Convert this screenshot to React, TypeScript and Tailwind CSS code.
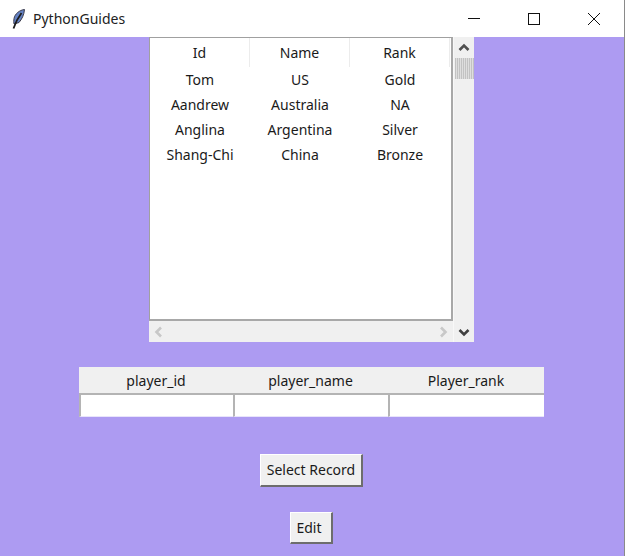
const rows = [
  ["Tom", "US", "Gold"],
  ["Aandrew", "Australia", "NA"],
  ["Anglina", "Argentina", "Silver"],
  ["Shang-Chi", "China", "Bronze"],
];

function Feather() {
  return (
    <svg width="13" height="20" viewBox="0 0 13 20">
      <path d="M12.500 .5C7.500 1 2.800 5 2 9.500c-.4 2.300-.3 3.800 0 5.500L7 13.500C10 10 12 6 12.500 .5z" fill="#6482c4" stroke="#3a3a4a" strokeWidth="1" />
      <path d="M9.500 4C6.500 8 3.500 13 1.500 19.500" fill="none" stroke="#1c1c1c" strokeWidth="1.800" />
    </svg>
  );
}

// scrollbar arrows, the lucide ones come out too thin
function Arrow({ points, color }: { points: string; color: string }) {
  return (
    <svg width="12" height="12" viewBox="0 0 12 12" style={{ color }}>
      <polyline points={points} fill="none" stroke="currentColor" strokeWidth="2.600" />
    </svg>
  );
}

export default function App() {
  return (
    <div className="w-[626px] h-[556px] bg-white">
      <div className="w-[625px] h-full flex flex-col overflow-hidden text-[14px] leading-none text-[#1a1a1a] font-['Noto_Sans',sans-serif] border-r border-[#8a8a8a]">
        <div className="h-[37px] shrink-0 flex items-center bg-white">
          <div className="w-[33px] pl-[12px] flex items-center"><Feather /></div>
          <span className="text-[14px] text-[#222]">PythonGuides</span>
          <div className="ml-auto flex items-center">
            <div className="w-[60px] flex justify-center">
              <svg width="12" height="12" viewBox="0 0 12 12" shapeRendering="crispEdges"><path d="M0 5.500h12" stroke="#111" /></svg>
            </div>
            <div className="w-[60px] flex justify-center">
              <svg width="12" height="12" viewBox="0 0 12 12" shapeRendering="crispEdges"><rect x=".5" y=".5" width="11" height="11" fill="none" stroke="#111" /></svg>
            </div>
            <div className="w-[60px] flex justify-center">
              <svg width="12" height="12" viewBox="0 0 12 12"><path d="M0 0l12 12M12 0L0 12" stroke="#111" strokeWidth="1" /></svg>
            </div>
          </div>
        </div>

        <div className="flex-1 bg-[#ad9bf2] flex flex-col items-center pr-px">
          <div className="w-[325px] h-[305px] shrink-0 bg-[#f0f0f0] flex">
            <div className="w-[304px] flex flex-col">
              <div className="h-[284px] bg-white border border-t-[#a0a0a0] border-l-[#a0a0a0] border-r-2 border-b-2 border-r-[#a8a8a8] border-b-[#a8a8a8] flex flex-col">
                <div className="h-[29px] grid grid-cols-[100px_100px_100px]">
                  {["Id", "Name", "Rank"].map((h) => (
                    <div key={h} className="flex items-center justify-center border-r border-[#ececec]">{h}</div>
                  ))}
                </div>
                {rows.map((r) => (
                  <div key={r[0]} className="h-[25px] grid grid-cols-[100px_100px_100px] items-center text-center">
                    {r.map((c) => <div key={c}>{c}</div>)}
                  </div>
                ))}
              </div>
              <div className="flex-1 flex items-center justify-between px-[4px]">
                <Arrow points="8,1.500 3.500,6 8,10.500" color="#c8c8c8" />
                <Arrow points="4,1.500 8.500,6 4,10.500" color="#c8c8c8" />
              </div>
            </div>
            <div className="flex-1 border-l border-[#f8f8f8] flex flex-col items-center">
              <div className="h-[21px] flex items-center"><Arrow points="1.500,8 6,3.500 10.500,8" color="#505050" /></div>
              <div className="w-[19px] h-[21px] bg-[repeating-linear-gradient(90deg,#c2c2c2_0,#c2c2c2_1px,#dedede_1px,#dedede_2px)]" />
              <div className="mt-auto h-[21px] flex items-center"><Arrow points="1.500,4 6,8.500 10.500,4" color="#404040" /></div>
            </div>
          </div>

          <div className="w-[465px] mt-[25px] grid grid-cols-[154px_155px_156px] bg-[#f0f0f0]">
            {["player_id", "player_name", "Player_rank"].map((h) => (
              <div key={h} className="h-[26px] pt-[2px] flex items-center justify-center">{h}</div>
            ))}
            {[0, 1, 2].map((i) => (
              <div key={i} className="h-[24px] bg-white border-t-2 border-l-2 border-[#b4b4b4] border-r-0 border-b border-b-[#e8e4fb]" />
            ))}
          </div>

          <button className="mt-[37px] w-[103px] h-[33px] bg-[#f0f0f0] border-t border-l border-white border-r-2 border-b-2 border-r-[#6d6d6d] border-b-[#6d6d6d] flex items-center justify-center">
            Select Record
          </button>
          <button className="mt-[25px] w-[43px] h-[32px] bg-[#f0f0f0] border-t border-l border-white border-r-2 border-b-2 border-r-[#6d6d6d] border-b-[#6d6d6d] flex items-center justify-center pr-[4px]">
            Edit
          </button>
        </div>
      </div>
    </div>
  );
}
